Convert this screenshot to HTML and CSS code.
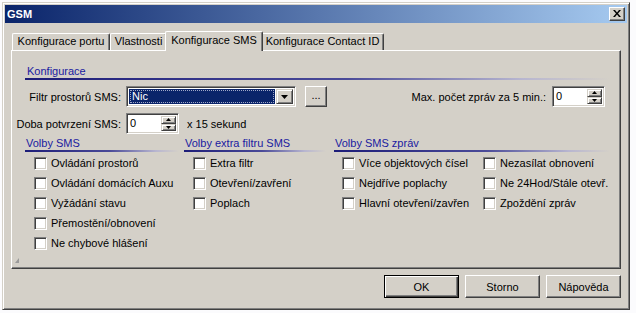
FILE: index.html
```html
<!DOCTYPE html>
<html lang="cs">
<head>
<meta charset="utf-8">
<title>GSM</title>
<link rel="stylesheet" href="styles.css">
</head>
<body>
<div class="window">
  <div class="titlebar">
    <span class="title">GSM</span>
    <span class="close"><svg width="8" height="7" viewBox="0 0 8 7"><path d="M0 0h2l2 2.5 2-2.5h2l-3 3.5 3 3.5h-2l-2-2.5-2 2.5h-2l3-3.5z" fill="#000"/></svg></span>
  </div>
  <div class="tabs">
    <div class="tab t1">Konfigurace portu</div>
    <div class="tab t2">Vlastnosti</div>
    <div class="tab sel">Konfigurace SMS</div>
    <div class="tab t4">Konfigurace Contact ID</div>
  </div>
  <div class="panel">
    <div class="sect">Konfigurace</div>
    <div class="row r1">
      <span class="lbl">Filtr prostorů SMS:</span>
      <div class="combo">
        <div class="combo-val"><span class="focus">Nic</span></div>
        <div class="combo-btn"><svg width="7" height="4" viewBox="0 0 7 4"><path d="M0 0h7L3.5 4z" fill="#000"/></svg></div>
      </div>
      <div class="btn dots">...</div>
      <span class="max">Max. počet zpráv za 5 min.:</span>
      <div class="spin">
        <div class="spin-val">0</div>
        <div class="spin-btns">
          <div class="sbtn"><svg width="5" height="3" viewBox="0 0 5 3"><path d="M0 3h5L2.5 0z" fill="#000"/></svg></div>
          <div class="sbtn"><svg width="5" height="3" viewBox="0 0 5 3"><path d="M0 0h5L2.5 3z" fill="#000"/></svg></div>
        </div>
      </div>
    </div>
    <div class="row r2">
      <span class="lbl">Doba potvrzení SMS:</span>
      <div class="spin">
        <div class="spin-val">0</div>
        <div class="spin-btns">
          <div class="sbtn"><svg width="5" height="3" viewBox="0 0 5 3"><path d="M0 3h5L2.5 0z" fill="#000"/></svg></div>
          <div class="sbtn"><svg width="5" height="3" viewBox="0 0 5 3"><path d="M0 0h5L2.5 3z" fill="#000"/></svg></div>
        </div>
      </div>
      <span class="unit">x 15 sekund</span>
    </div>
    <div class="cols">
      <div class="col c1">
        <div class="head">Volby SMS</div>
        <div class="checks">
          <label class="chk"><span class="box"></span>Ovládání prostorů</label>
          <label class="chk"><span class="box"></span>Ovládání domácích Auxu</label>
          <label class="chk"><span class="box"></span>Vyžádání stavu</label>
          <label class="chk"><span class="box"></span>Přemostění/obnovení</label>
          <label class="chk"><span class="box"></span>Ne chybové hlášení</label>
        </div>
      </div>
      <div class="col c2">
        <div class="head">Volby extra filtru SMS</div>
        <div class="checks">
          <label class="chk"><span class="box"></span>Extra filtr</label>
          <label class="chk"><span class="box"></span>Otevření/zavření</label>
          <label class="chk"><span class="box"></span>Poplach</label>
        </div>
      </div>
      <div class="col c3">
        <div class="head">Volby SMS zpráv</div>
        <div class="checks grid2">
          <label class="chk"><span class="box"></span>Více objektových čísel</label>
          <label class="chk b"><span class="box"></span>Nezasílat obnovení</label>
          <label class="chk"><span class="box"></span>Nejdříve poplachy</label>
          <label class="chk b"><span class="box"></span>Ne 24Hod/Stále otevř.</label>
          <label class="chk"><span class="box"></span>Hlavní otevření/zavřen</label>
          <label class="chk b"><span class="box"></span>Zpoždění zpráv</label>
        </div>
      </div>
    </div>
    <div class="grip"><svg width="5" height="5" viewBox="0 0 5 5"><path d="M4 0v5H0z" fill="#9a9a9a"/></svg></div>
  </div>
  <div class="buttons">
    <div class="btn push default">OK</div>
    <div class="btn push">Storno</div>
    <div class="btn push">Nápověda</div>
  </div>
</div>
</body>
</html>
```
FILE: styles.css
```css
* { box-sizing: border-box; }
html, body { margin: 0; padding: 0; }
body {
  background: #fbfbfd;
  font-family: "Liberation Sans", Arial, sans-serif;
  font-size: 11px;
  color: #000;
  width: 636px;
  height: 313px;
  overflow: hidden;
}
.window {
  margin: 2px 0 0 2px;
  width: 628px;
  height: 308px;
  background: #d4d0c8;
  border: 1px solid;
  border-color: #d4d0c8 #404040 #404040 #d4d0c8;
  box-shadow: inset 1px 1px #fff, inset -1px -1px #808080;
  padding: 2px;
  display: flex;
  flex-direction: column;
}
.titlebar {
  height: 18px;
  display: flex;
  align-items: center;
  padding-left: 2px;
  background: linear-gradient(to right, #0a246a, #a6caf0);
  color: #fff;
  font-weight: bold;
}
.title { line-height: 13px; }
.close {
  margin-left: auto;
  margin-right: 2px;
  width: 16px;
  height: 14px;
  background: #d4d0c8;
  border: 1px solid;
  border-color: #fff #404040 #404040 #fff;
  box-shadow: inset -1px -1px #808080;
  display: flex;
  align-items: center;
  justify-content: center;
  padding-bottom: 1px;
}
.close svg { display: block; }
.tabs {
  display: flex;
  align-items: flex-end;
  height: 19px;
  margin: 8px 0 0 7px;
}
.tab {
  height: 17px;
  line-height: 15px;
  text-align: center;
  background: #d4d0c8;
  border-top: 1px solid #fff;
  border-left: 1px solid #fff;
  border-right: 1px solid #404040;
  box-shadow: inset -1px 0 #808080;
  border-radius: 2px 2px 0 0;
  white-space: nowrap;
}
.t1 { width: 98px; }
.t2 { width: 57px; }
.sel {
  width: 98px;
  height: 20px;
  margin: 0 -2px -1px;
  position: relative;
  z-index: 2;
  line-height: 16px;
}
.t4 { width: 123px; }
.panel {
  margin-left: 6px;
  width: 610px;
  height: 219px;
  background: #d4d0c8;
  border: 1px solid;
  border-color: #fff #404040 #404040 #fff;
  box-shadow: inset -1px -1px #808080;
  display: flex;
  flex-direction: column;
}
.sect {
  margin: 14px 10px 0 13px;
  padding: 0 0 2px 2px;
  line-height: 13px;
  color: #1a1aa0;
  background: linear-gradient(to right, #1c1c78 0%, #4a4a98 55%, #b8b6d0 85%, #d4d0c8 100%) left bottom / 100% 2px no-repeat;
}
.row {
  display: flex;
  align-items: center;
  height: 21px;
}
.r1 { margin-top: 6px; }
.r2 { margin-top: 6px; }
.lbl {
  width: 105px;
  margin-left: 4px;
  margin-right: 5px;
  text-align: right;
  white-space: nowrap;
}
.combo {
  width: 170px;
  height: 21px;
  border: 1px solid;
  border-color: #808080 #fff #fff #808080;
  box-shadow: inset 1px 1px #404040, inset -1px -1px #d4d0c8;
  background: #fff;
  padding: 2px;
  display: flex;
}
.combo-val {
  flex: 1;
  background: #0a246a;
  color: #fff;
  margin-right: 1px;
  padding: 1px;
  display: flex;
}
.focus {
  flex: 1;
  border: 1px dotted #a0a8c8;
  line-height: 11px;
  padding-left: 1px;
}
.combo-btn {
  width: 17px;
  background: #d4d0c8;
  border: 1px solid;
  border-color: #d4d0c8 #404040 #404040 #d4d0c8;
  box-shadow: inset 1px 1px #fff, inset -1px -1px #808080;
  display: flex;
  align-items: center;
  justify-content: center;
}
.combo-btn svg { display: block; }
.btn {
  background: #d4d0c8;
  border: 1px solid;
  border-color: #fff #404040 #404040 #fff;
  box-shadow: inset -1px -1px #808080;
  display: flex;
  align-items: center;
  justify-content: center;
}
.dots {
  width: 22px;
  height: 21px;
  margin-left: 9px;
  padding-bottom: 3px;
}
.max {
  margin-left: auto;
  margin-right: 6px;
  white-space: nowrap;
}
.spin {
  width: 53px;
  height: 21px;
  border: 1px solid;
  border-color: #808080 #fff #fff #808080;
  box-shadow: inset 1px 1px #404040, inset -1px -1px #d4d0c8;
  background: #fff;
  padding: 2px;
  display: flex;
}
.r1 .spin { margin-right: 15px; }
.spin-val {
  flex: 1;
  line-height: 15px;
  padding-left: 1px;
}
.spin-btns {
  width: 15px;
  display: flex;
  flex-direction: column;
}
.sbtn {
  flex: 1;
  background: #d4d0c8;
  border: 1px solid;
  border-color: #d4d0c8 #404040 #404040 #d4d0c8;
  box-shadow: inset 1px 1px #fff, inset -1px -1px #808080;
  display: flex;
  align-items: center;
  justify-content: center;
}
.sbtn svg { display: block; }
.unit { margin-left: 8px; }
.cols {
  display: flex;
  margin: 3px 0 0 13px;
}
.col { display: flex; flex-direction: column; }
.c1 { width: 154px; }
.c2 { width: 142px; margin-left: 5px; }
.c3 { width: 276px; margin-left: 8px; }
.head {
  line-height: 13px;
  padding: 0 0 2px 1px;
  color: #1a1aa0;
  background: linear-gradient(to right, #1c1c78 0%, #4a4a98 55%, #b8b6d0 85%, #d4d0c8 100%) left bottom / 100% 2px no-repeat;
}
.checks {
  margin-top: 1px;
  display: flex;
  flex-direction: column;
}
.grid2 {
  display: grid;
  grid-template-columns: 149px 1fr;
}
.chk {
  height: 20px;
  display: flex;
  align-items: center;
  padding-left: 9px;
  white-space: nowrap;
}
.c3 .chk { padding-left: 8px; }
.c3 .chk.b { padding-left: 0; }
.box {
  width: 13px;
  height: 13px;
  margin-right: 4px;
  background: #fff;
  border: 1px solid;
  border-color: #808080 #fff #fff #808080;
  box-shadow: inset 1px 1px #404040, inset -1px -1px #d4d0c8;
  flex: none;
}
.grip {
  margin: auto 0 5px 3px;
  height: 5px;
}
.grip svg { display: block; }
.buttons {
  display: flex;
  justify-content: flex-end;
  gap: 6px;
  margin-top: 6px;
  padding-right: 6px;
}
.push {
  width: 75px;
  height: 23px;
}
.default {
  border: 1px solid #000;
  box-shadow: inset 1px 1px #fff, inset -1px -1px #404040, inset -2px -2px #808080;
}
```
